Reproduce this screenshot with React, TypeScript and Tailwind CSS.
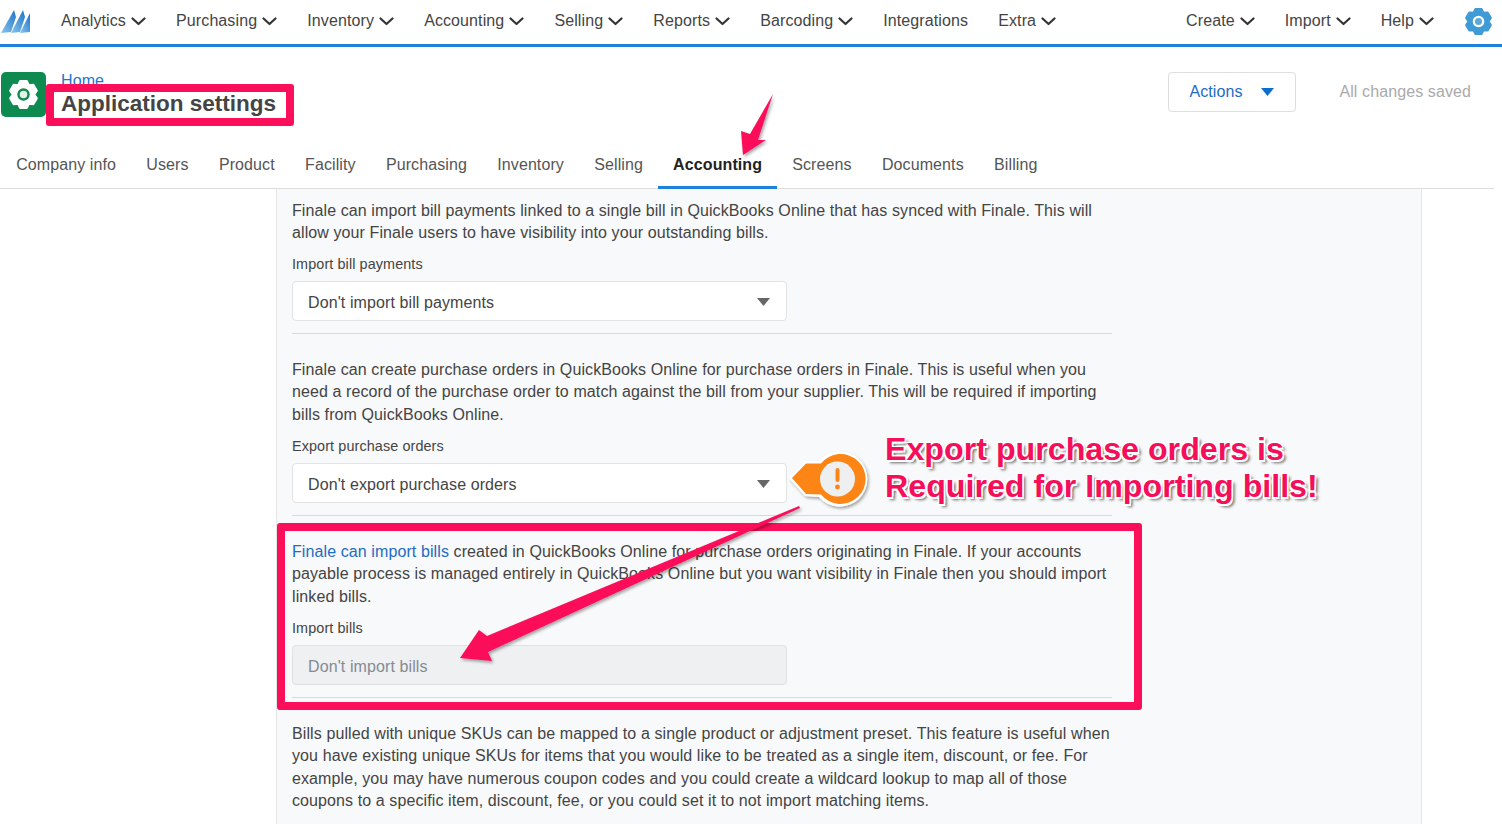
import type { ReactNode } from "react";

const navLeft: [string, boolean][] = [
  ["Analytics", true],
  ["Purchasing", true],
  ["Inventory", true],
  ["Accounting", true],
  ["Selling", true],
  ["Reports", true],
  ["Barcoding", true],
  ["Integrations", false],
  ["Extra", true],
];
const navRight = ["Create", "Import", "Help"];
const tabs = ["Company info", "Users", "Product", "Facility", "Purchasing", "Inventory", "Selling", "Accounting", "Screens", "Documents", "Billing"];

function gearPath() {
  const pts: string[] = [];
  for (let i = 0; i < 6; i++) {
    const a = (i * Math.PI) / 3 - Math.PI / 2;
    const p = (r: number, d: number) => `${(14 + r * Math.cos(a + d)).toFixed(2)},${(14 + r * Math.sin(a + d)).toFixed(2)}`;
    pts.push(p(9.5, -0.5), p(12.2, -0.24), p(12.2, 0.24), p(9.5, 0.5));
  }
  return pts.join(" ");
}

function Gear({ size, color, ring, dot }: { size: number; color: string; ring: string; dot: string }) {
  return (
    <svg width={size} height={size} viewBox="0 0 28 28" className="shrink-0">
      <polygon points={gearPath()} fill={color} stroke={color} strokeWidth="2.4" strokeLinejoin="round" />
      <circle cx="14" cy="14" r="5.6" fill={ring} />
      <circle cx="14" cy="14" r="3.4" fill={dot} />
    </svg>
  );
}

function Chevron() {
  return (
    <svg width="15" height="9" viewBox="0 0 15 9" className="shrink-0">
      <polyline points="1.5,1.5 7.5,7 13.5,1.5" fill="none" stroke="#333" strokeWidth="2.2" strokeLinecap="round" strokeLinejoin="round" />
    </svg>
  );
}

function NavItem({ label, chevron = true }: { label: string; chevron?: boolean }) {
  return (
    <div className="flex items-center gap-[5px] text-[16px] tracking-[0.1px] text-[#444]">
      <span>{label}</span>
      {chevron && <Chevron />}
    </div>
  );
}

function Triangle({ color }: { color: string }) {
  return (
    <svg width="13" height="8" viewBox="0 0 13 8" className="shrink-0">
      <polygon points="0,0 13,0 6.5,8" fill={color} />
    </svg>
  );
}

function Select({ value, disabled = false }: { value: string; disabled?: boolean }) {
  return disabled ? (
    <div className="flex h-[40px] w-[495px] items-center rounded border border-[#dfe1e4] bg-[#eef0f2] pl-[15px] pr-[16px] text-[16px] tracking-[0.1px] text-[#858b92]">
      <span className="pt-[4px]">{value}</span>
    </div>
  ) : (
    <div className="flex h-[40px] w-[495px] items-center justify-between rounded border border-[#e3e3e3] bg-white pl-[15px] pr-[16px] text-[16px] tracking-[0.1px] text-[#444]">
      <span className="pt-[4px]">{value}</span>
      <span className="pt-[2px]">
        <Triangle color="#666" />
      </span>
    </div>
  );
}

function Section({ label, value, disabled, tall = true, children }: { label: string; value: string; disabled?: boolean; tall?: boolean; children: ReactNode }) {
  return (
    <div className="mb-[24.5px]">
      <p className="text-[16px] leading-[22.5px] tracking-[0.1px] text-[#444]">{children}</p>
      <div className={tall ? "mt-[10px] h-[20px] text-[14.4px] leading-[20px] tracking-[0.1px] text-[#444]" : "mt-[9.5px] h-[20px] text-[14.4px] leading-[20px] tracking-[0.1px] text-[#444]"}>{label}</div>
      <div className="mt-[7px]">
        <Select value={value} disabled={disabled} />
      </div>
      <div className="mt-[12px] h-px bg-[#d9d9d9]" />
    </div>
  );
}

export default function App() {
  return (
    <div className="relative h-[824px] w-[1502px] overflow-hidden bg-white font-['Liberation_Sans',Arial,sans-serif]">
      <nav className="flex h-[47px] items-center justify-between border-b-[3px] border-[#1e82dc] pb-[2px] pl-[1px] pr-[9px]">
        <div className="flex items-center">
          <svg width="30" height="24" viewBox="0 0 30 24" className="mr-[30px]">
            <defs>
              <linearGradient id="lg" x1="0" y1="1" x2="1" y2="0">
                <stop offset="0" stopColor="#8cc6ee" />
                <stop offset="1" stopColor="#1b74c8" />
              </linearGradient>
            </defs>
            <polygon points="0,24 13,1 15,8 10,23" fill="url(#lg)" />
            <polygon points="10,24 22,1 24,8 19,23" fill="url(#lg)" />
            <polygon points="19,24 29,4 29,23" fill="url(#lg)" />
          </svg>
          <div className="flex items-center gap-[30.15px]">
            {navLeft.map(([l, c]) => (
              <NavItem key={l} label={l} chevron={c} />
            ))}
          </div>
        </div>
        <div className="flex items-center gap-[30px]">
          {navRight.map((l) => (
            <NavItem key={l} label={l} />
          ))}
          <Gear size={29} color="#3f9bd6" ring="#ffffff" dot="#5aa9de" />
        </div>
      </nav>

      <header className="flex h-[93px] w-[1494px] justify-between pl-[1px] pr-[23px]">
        <div className="flex">
          <div className="mt-[25px] flex h-[45px] w-[45px] items-center justify-center rounded-[5px] bg-[#0c8a50]">
            <Gear size={31} color="#ffffff" ring="#0c8a50" dot="#e4f2ea" />
          </div>
          <div className="ml-[15px] mt-[25px]">
            <div className="h-[18px] text-[16px] leading-[18px] tracking-[0.1px] text-[#1976d2]">Home</div>
            <h1 className="text-[22.5px] font-bold leading-[28px] text-[#444]">Application settings</h1>
          </div>
        </div>
        <div className="flex items-start">
          <button className="mt-[25px] flex h-[40px] w-[128px] items-center rounded border border-[#dedede] bg-white pl-[20px] text-[16px] tracking-[0.1px] text-[#1c6cc4]">
            <span>Actions</span>
            <span className="ml-[18px]">
              <Triangle color="#0b6fcf" />
            </span>
          </button>
          <div className="ml-[43px] mt-[36px] text-[16px] leading-[18px] tracking-[0.1px] text-[#aaaaaa]">All changes saved</div>
        </div>
      </header>

      <div className="flex h-[49px] w-[1494px] items-stretch border-b border-[#dcdcdc] pl-[1px] pt-[2px]">
        {tabs.map((t) =>
          t === "Accounting" ? (
            <div key={t} className="-mb-px flex items-center border-b-[3px] border-[#1e82dc] px-[15px] pt-[2px] text-[16px] font-bold tracking-[0.1px] text-[#222]">
              {t}
            </div>
          ) : (
            <div key={t} className="flex items-center px-[15.15px] text-[16px] tracking-[0.1px] text-[#555]">
              {t}
            </div>
          )
        )}
      </div>

      <main className="ml-[276px] h-[635px] w-[1146px] border-x border-[#e6e6e6] bg-[#f8f9fa] px-[15px] pt-[10.5px]">
        <div className="w-[820px]">
          <Section tall={false} label="Import bill payments" value="Don't import bill payments">
            Finale can import bill payments linked to a single bill in QuickBooks Online that has synced with Finale. This will allow your Finale users to have visibility into your outstanding bills.
          </Section>
          <Section label="Export purchase orders" value="Don't export purchase orders">
            Finale can create purchase orders in QuickBooks Online for purchase orders in Finale. This is useful when you need a record of the purchase order to match against the bill from your supplier. This will be required if importing bills from QuickBooks Online.
          </Section>
          <Section label="Import bills" value="Don't import bills" disabled>
            <span className="text-[#1c6cc4]">Finale can import bills</span> created in QuickBooks Online for purchase orders originating in Finale. If your accounts payable process is managed entirely in QuickBooks Online but you want visibility in Finale then you should import linked bills.
          </Section>
          <p className="text-[16px] leading-[22.5px] tracking-[0.1px] text-[#444]">
            Bills pulled with unique SKUs can be mapped to a single product or adjustment preset. This feature is useful when you have existing unique SKUs for items that you would like to be treated as a single item, discount, or fee. For example, you may have numerous coupon codes and you could create a wildcard lookup to map all of those coupons to a specific item, discount, fee, or you could set it to not import matching items.
          </p>
        </div>
      </main>

      {/* Annotation overlays */}
      <div className="absolute left-[46px] top-[84px] h-[42px] w-[248px] rounded-[3px] border-[8px] border-[#fb0f5a]" />
      <div className="absolute left-[277px] top-[523px] h-[187px] w-[865px] rounded-[3px] border-[8px] border-[#fb0f5a]" />

      <svg className="pointer-events-none absolute left-0 top-0" width="1502" height="824" viewBox="0 0 1502 824">
        <defs>
          <filter id="ds" x="-20%" y="-20%" width="140%" height="140%">
            <feDropShadow dx="1.5" dy="2" stdDeviation="1.5" floodColor="#000" floodOpacity="0.35" />
          </filter>
        </defs>
        <polygon points="773,94 758,140 766,140 743,155 741,131 750,134" fill="#fb0f5a" filter="url(#ds)" />
        <polygon points="799,506 487,636 479,630 460,658 492,661 488,652 800,508" fill="#fb0f5a" filter="url(#ds)" />
        <g filter="url(#ds)">
          <path d="M789,478 L805,461 L819,461 A27.5,27.5 0 1 1 819,497 L805,496 Z" fill="#fff" />
          <path d="M792,478 L806,463.5 L821,463.5 A25,25 0 1 1 821,494.5 L806,494 Z" fill="#fd8517" />
        </g>
        <circle cx="837.5" cy="479" r="17.5" fill="#eeeff1" />
        <rect x="835.5" y="468" width="4" height="14" rx="2" fill="#fd8517" />
        <circle cx="837.5" cy="487" r="2.4" fill="#fd8517" />
      </svg>

      <div className="absolute left-[885px] top-[431px] whitespace-nowrap text-[32.2px] font-bold leading-[36.5px] text-[#f50f5a] [text-shadow:1.5px_1.5px_0_#fff,-1.5px_-1.5px_0_#fff,1.5px_-1.5px_0_#fff,-1.5px_1.5px_0_#fff,3px_3px_3px_#666]">
        Export purchase orders is
        <br />
        Required for Importing bills!
      </div>
    </div>
  );
}
